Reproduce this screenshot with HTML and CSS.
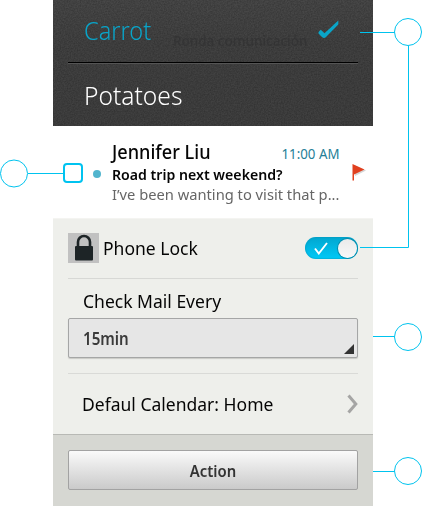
FILE: index.html
```html
<!DOCTYPE html>
<html lang="en">
<head>
<meta charset="utf-8">
<title>Settings building blocks</title>
<link rel="stylesheet" href="styles.css">
</head>
<body>
<main class="panel">
  <section class="picker">
    <svg class="grain" width="320" height="126" aria-hidden="true">
      <filter id="noise"><feTurbulence type="fractalNoise" baseFrequency="0.7" numOctaves="2"/><feColorMatrix values="0 0 0 0 0  0 0 0 0 0  0 0 0 0 0  .7 0 0 0 -.2"/></filter>
      <rect width="320" height="126" filter="url(#noise)"/>
    </svg>
    <span class="ghost">Ronda comunicación</span>
    <div class="option selected">
      <span class="t carrot">Carrot</span>
      <svg class="tick" width="21" height="19" viewBox="0 0 21 19"><path d="M.5 12 2.800 9.700 6.500 13.200 20.300 .5V4.500L8 17Q6 19.200 4 17L.5 13.500Z" fill="#0aa5c8"/></svg>
    </div>
    <div class="option"><span class="t potatoes">Potatoes</span></div>
  </section>
  <section class="mail">
    <span class="checkbox"></span>
    <span class="unread"></span>
    <div class="message">
      <div class="head"><span class="t sender">Jennifer Liu</span><span class="t time">11:00 AM</span></div>
      <div class="line"><span class="t subject">Road trip next weekend?</span></div>
      <div class="line"><span class="t preview">I’ve been wanting to visit that p...</span></div>
    </div>
    <svg class="flag" width="14" height="18" viewBox="0 0 14 18"><path d="M2 1 14 6.500 3 12" fill="#bbb" opacity=".6"/><path d="M.5 0 12.500 5.500 2 10.500V16.500H.5Z" fill="#e1401f"/></svg>
  </section>
  <section class="settings">
    <div class="row lock">
      <span class="lock-icon"><svg width="31" height="30" viewBox="0 0 31 30"><path d="M10 14V9a5.800 5.800 0 0 1 12 0v5" fill="none" stroke="#1d2426" stroke-width="2.600"/><rect x="7" y="13" width="18" height="14.500" rx="1" fill="#1d2426"/></svg></span>
      <span class="t phone">Phone Lock</span>
      <span class="switch"><svg width="14" height="13" viewBox="0 0 14 13"><path d="M1 6.500 4.800 11.500 13 1" fill="none" stroke="#fff" stroke-width="1.900"/></svg><span class="knob"></span></span>
    </div>
    <div class="check">
      <div class="label"><span class="t every">Check Mail Every</span></div>
      <div class="select"><span class="t mins">15min</span><span class="corner"></span></div>
    </div>
    <div class="row calendar">
      <span class="t home">Defaul Calendar: Home</span>
      <svg width="11" height="20" viewBox="0 0 11 20"><path d="M1.500 1.500 8.800 10 1.500 18.500" fill="none" stroke="#a5a5a4" stroke-width="3"/></svg>
    </div>
  </section>
  <footer class="actions"><button class="action"><span class="t act">Action</span></button></footer>
</main>
<svg class="callouts" width="423" height="506" viewBox="0 0 423 506" fill="none" stroke="#00c3ee">
  <circle cx="408" cy="32" r="13.500"/><circle cx="14" cy="173.500" r="13.500"/><circle cx="408" cy="337" r="13.500"/><circle cx="408" cy="471" r="13.500"/>
  <path d="M360 32.500H394.500M408.500 46V247.500H360M28 173.500H63M373 336.500H394.500M373 471.500H394.500"/>
</svg>
</body>
</html>
```
FILE: styles.css
```css
* { box-sizing: border-box; }
body { margin: 0; width: 423px; height: 506px; background: #fff; font-family: "Noto Sans", sans-serif; color: #050505; overflow: hidden; position: relative; }
.panel { width: 320px; margin-left: 53px; }
.t { display: inline-block; white-space: nowrap; transform-origin: left center; line-height: 24px; }

.picker { height: 126px; position: relative; background: linear-gradient(#484848, #424242 35%, #404040); padding: 0 15px; }
.grain { position: absolute; inset: 0; opacity: .55; }
.ghost { position: absolute; left: 120px; top: 32px; font-size: 13.5px; line-height: 18px; color: #313132; font-weight: 500; opacity: .7; }
.option { position: relative; height: 63px; padding: 0 19px 0 16px; display: flex; align-items: center; justify-content: space-between; }
.selected { border-bottom: 1px solid #000; box-shadow: 0 1px #555; padding-bottom: 3px; }
.carrot, .potatoes { font-size: 26px; font-weight: 300; color: #fff; }
.carrot { color: #08a5ca; transform: scaleX(.905); }
.potatoes { transform: scaleX(.945); }

.mail { height: 93px; display: flex; position: relative; border-bottom: 1px solid #f4f4f1; }
.checkbox { width: 20px; height: 20px; border: 2px solid #00c3f0; border-radius: 4px; margin: 37px 0 0 10px; background: #fff; }
.unread { width: 8px; height: 8px; border-radius: 50%; background: #52b5ce; margin: 44px 0 0 10px; }
.message { width: 228px; margin: 14px 0 0 11px; }
.head { display: flex; justify-content: space-between; height: 24px; align-items: center; }
.line { height: 20px; display: flex; align-items: center; }
.sender { font-size: 19px; font-weight: 500; transform: scaleX(.955); }
.time { font-size: 15px; color: #258097; transform-origin: right center; transform: translate(-1px, 1px) scaleX(.885); }
.subject { font-size: 14.500px; font-weight: 600; transform: scaleX(.975); }
.preview { font-size: 15px; color: #666; transform: scaleX(.98); }
.flag { margin: 38px 0 0 12px; }

.settings { height: 215px; background: #eeefeb; padding: 0 15px; }
.row { display: flex; align-items: center; }
.lock { height: 60px; border-bottom: 1px solid #d7d8d5; padding-bottom: 1px; }
.lock-icon { width: 31px; height: 30px; background: #c1c1c1; margin-right: 4px; }
.phone, .every, .home { font-size: 18px; transform: scaleX(.973); }
.switch { margin-left: auto; width: 53px; height: 22px; border-radius: 11px; background: linear-gradient(#01a6cf, #00c9f7); display: flex; align-items: center; justify-content: space-between; padding: 0 1px 0 9px; box-shadow: inset 0 0 1px 1px #0796ba66; }
.knob { width: 19px; height: 19px; border-radius: 50%; background: linear-gradient(#eaeaea, #f8f8f8); box-shadow: 0 0 0 1px #078baa; }
.check { height: 95px; padding-top: 10px; border-bottom: 1px solid #d9dad7; }
.label { height: 29px; padding: 0 0 0 15px; }
.select { height: 40px; border: 1px solid #a5a6a6; border-radius: 2px; background: #e6e6e6; box-shadow: 0 1px 1px #c9c9c6; padding: 0 3px 3px 14px; display: flex; align-items: center; justify-content: space-between; }
.mins { font-size: 17px; font-weight: 600; color: #3a3a3a; position: relative; top: 2px; transform: scaleX(.89); }
.corner { width: 10px; height: 10px; align-self: flex-end; background: #333; clip-path: polygon(100% 0, 100% 100%, 0 100%); }
.calendar { height: 60px; padding-left: 14px; justify-content: space-between; }

.actions { height: 73px; background: #d6d7d2; border-top: 1px solid #b8b9b5; padding: 15px 15px 0; }
.action { display: flex; align-items: center; justify-content: center; width: 290px; height: 40px; padding: 2px 0 0; border: 1px solid #a2a2a2; border-radius: 2px; background: linear-gradient(#fafafa, #cacaca); font: 600 16px "Noto Sans", sans-serif; color: #333; }
.act { transform-origin: center; transform: scaleX(.93); }
.callouts { position: absolute; left: 0; top: 0; pointer-events: none; }
```
